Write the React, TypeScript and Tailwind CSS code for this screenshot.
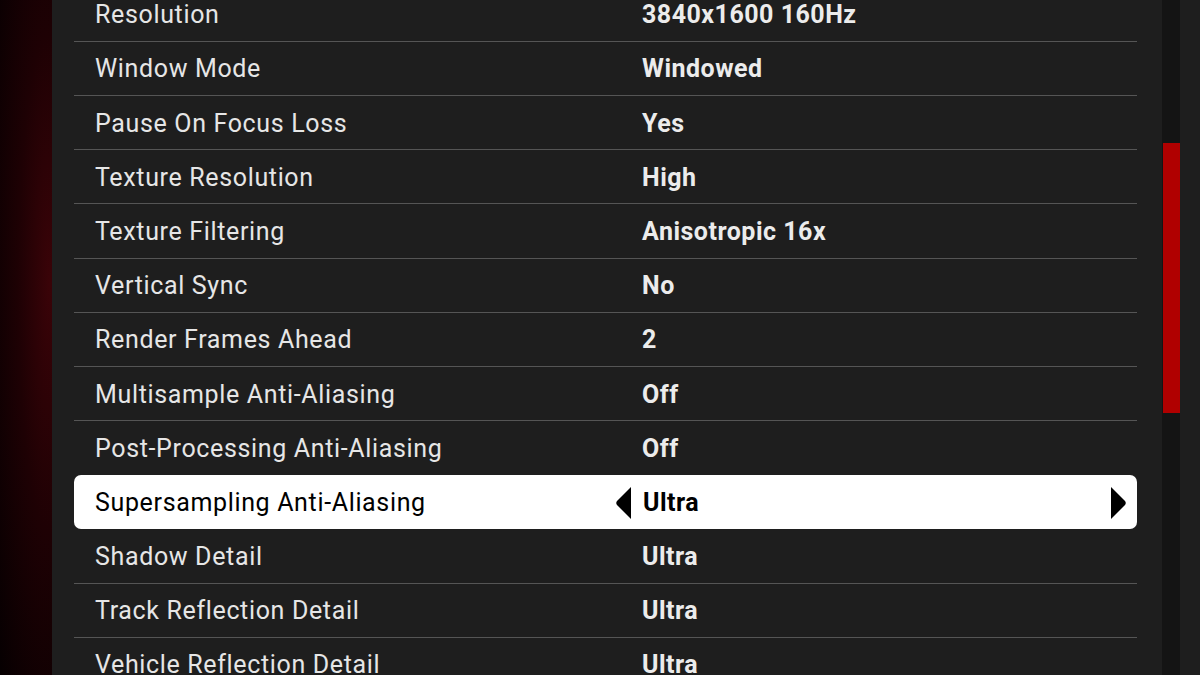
import React from 'react';

interface SettingRow {
  label: string;
  value: string;
}

const rows: SettingRow[] = [
  { label: 'Resolution', value: '3840x1600 160Hz' },
  { label: 'Window Mode', value: 'Windowed' },
  { label: 'Pause On Focus Loss', value: 'Yes' },
  { label: 'Texture Resolution', value: 'High' },
  { label: 'Texture Filtering', value: 'Anisotropic 16x' },
  { label: 'Vertical Sync', value: 'No' },
  { label: 'Render Frames Ahead', value: '2' },
  { label: 'Multisample Anti-Aliasing', value: 'Off' },
  { label: 'Post-Processing Anti-Aliasing', value: 'Off' },
  { label: 'Supersampling Anti-Aliasing', value: 'Ultra' },
  { label: 'Shadow Detail', value: 'Ultra' },
  { label: 'Track Reflection Detail', value: 'Ultra' },
  { label: 'Vehicle Reflection Detail', value: 'Ultra' },
];

const SELECTED = 9;

const Arrow: React.FC<{ dir: 'left' | 'right' }> = ({ dir }) => (
  <svg width="18" height="34" viewBox="0 0 18 34" className="shrink-0">
    {dir === 'left' ? (
      <path d="M16 1 L2 15 Q0.5 17 2 19 L16 33 Z" fill="#000" />
    ) : (
      <path d="M2 1 L16 15 Q17.5 17 16 19 L2 33 Z" fill="#000" />
    )}
  </svg>
);

const App: React.FC = () => {
  return (
    <div
      className="flex h-[675px] w-[1200px] overflow-hidden bg-[#1e1e1e]"
      style={{ fontFamily: 'Roboto, "Noto Sans", sans-serif' }}
    >
      <div className="w-[52px] shrink-0 bg-[radial-gradient(ellipse_at_95%_42%,#3a0308_0%,#1e0104_45%,#060001_100%)]" />

      <div className="flex-1 bg-[#1e1e1e] pl-[22px] pr-[25px]">
        <div className="-mt-[12.4px]">
          {rows.map((row, i) => {
            const selected = i === SELECTED;
            const beforeSelected = i === SELECTED - 1;
            if (selected) {
              return (
                <div
                  key={row.label}
                  className="flex h-[54.2px] items-center rounded-[7px] bg-white pl-[21px] pr-[10px] pt-[1px]"
                >
                  <span className="w-[520px] text-[25px] leading-none tracking-[0.65px] text-black">{row.label}</span>
                  <Arrow dir="left" />
                  <span className="ml-[10px] flex-1 text-[25px] font-bold leading-none tracking-[0.5px] text-black">
                    {row.value}
                  </span>
                  <Arrow dir="right" />
                </div>
              );
            }
            return (
              <div
                key={row.label}
                className={`flex h-[54.2px] items-center pl-[21px] pt-[1px] ${
                  beforeSelected ? '' : 'border-b-[1.5px] border-[#555555]'
                }`}
              >
                <span className="w-[547px] text-[25px] leading-none tracking-[0.65px] text-[#e6e6e6]">{row.label}</span>
                <span className="text-[25px] font-bold leading-none tracking-[0.5px] text-[#ececec]">{row.value}</span>
              </div>
            );
          })}
        </div>
      </div>

      <div className="flex w-[18px] shrink-0 flex-col bg-[#141414] pt-[143px]">
        <div className="ml-[1px] h-[270px] w-[17px] bg-[#b00000]" />
      </div>

      <div className="w-[20px] shrink-0 bg-[#1e1e1e]" />
    </div>
  );
};

export default App;
